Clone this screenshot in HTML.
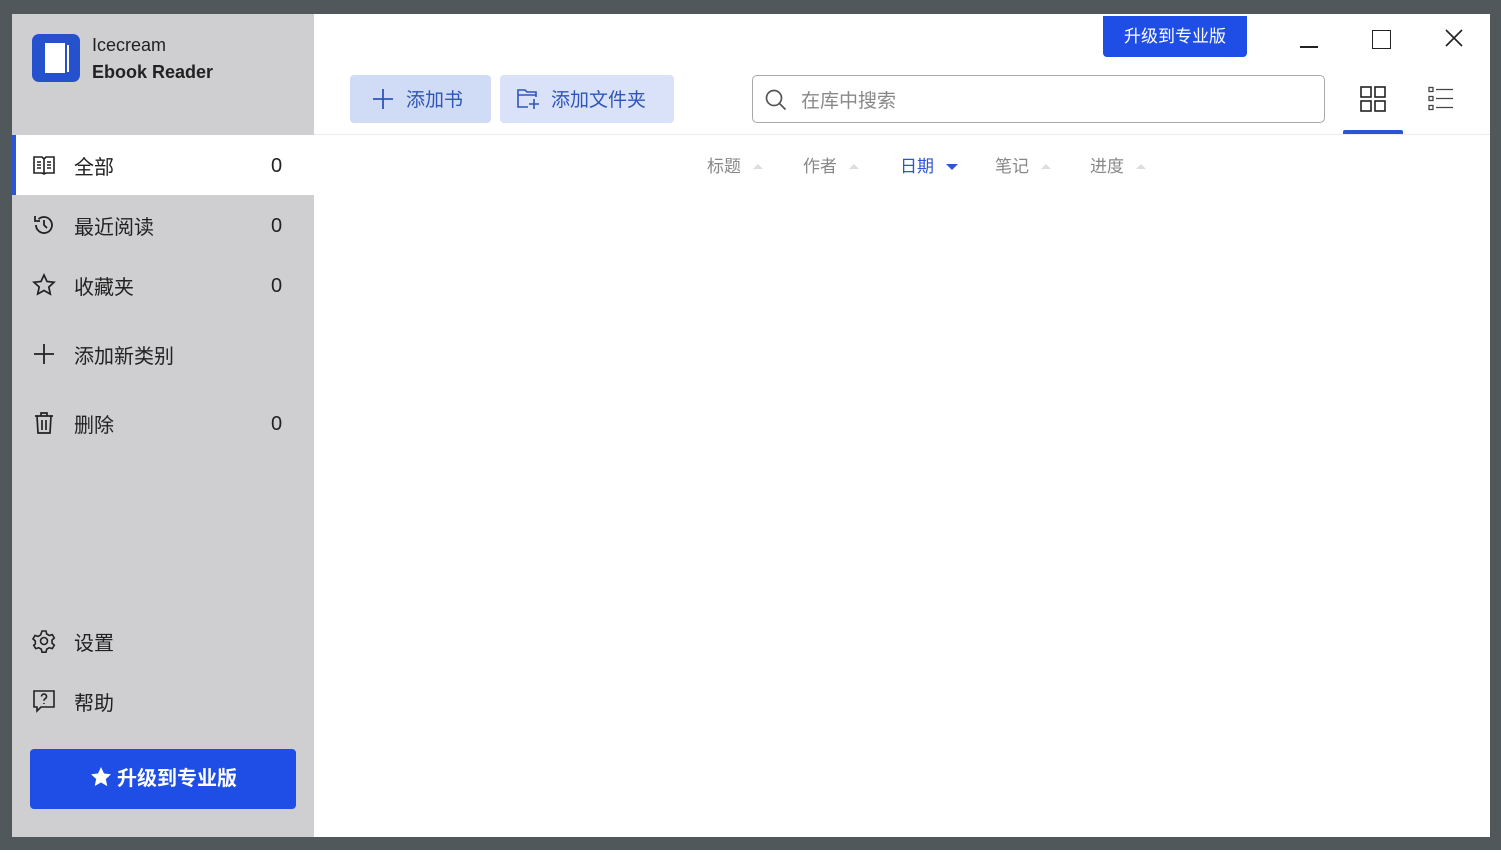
<!DOCTYPE html>
<html><head><meta charset="utf-8"><style>
*{margin:0;padding:0;box-sizing:border-box}
body{width:1501px;height:853px;background:#fff;position:relative;overflow:hidden;font-family:"Liberation Sans","Noto Sans CJK SC",sans-serif;color:#222}
.frame{position:absolute;left:0;top:0;width:1501px;height:850px;background:#50585c}
.win{position:absolute;left:12px;top:14px;width:1478px;height:823px;background:#fff}
.side{position:absolute;left:0;top:0;width:302px;height:823px;background:#cfcfd1}
.abs{position:absolute}
.item{position:absolute;left:0;width:302px;height:60px;font-size:20px;color:#222}
.item .ic{position:absolute;left:20px;top:18px;width:24px;height:24px}
.item .t{position:absolute;left:62px;top:16px}
.item .n{position:absolute;left:259px;top:20px;font-size:20px}
.sort{position:absolute;top:138px;font-size:17px;color:#888}
.tri{display:inline-block;width:0;height:0;border-left:5px solid transparent;border-right:5px solid transparent;border-bottom:5px solid #ddd;margin-left:12px;vertical-align:3px}
</style></head><body>
<div class="frame"></div>
<div class="win">
 <div class="side">
  <div class="abs" style="left:20px;top:20px;width:48px;height:48px;background:#2552cc;border-radius:7px">
   <div class="abs" style="left:13px;top:9px;width:20px;height:30px;background:#fff"></div>
   <div class="abs" style="left:35px;top:11px;width:2px;height:27px;background:#fff"></div>
  </div>
  <div class="abs" style="left:80px;top:21px;font-size:18px">Icecream</div>
  <div class="abs" style="left:80px;top:48px;font-size:18px;font-weight:bold">Ebook Reader</div>
  <div class="item" style="top:121px;background:#fff;border-left:4px solid #2a55d6">
   <svg class="ic" style="left:16px" viewBox="0 0 24 24" fill="none" stroke="#222" stroke-width="1.6"><path d="M2 4h8l2 2 2-2h8v16h-8l-2 1-2-1H2z M12 6v15 M5 9h4 M5 12h4 M5 15h4 M15 9h4 M15 12h4 M15 15h4"/></svg>
   <span class="t" style="left:58px">全部</span><span class="n" style="left:255px">0</span></div>
  <div class="item" style="top:181px">
   <svg class="ic" viewBox="0 0 24 24" fill="none" stroke="#222" stroke-width="1.8"><path d="M4 12a8 8 0 1 0 2.5-5.8 M3 3v5h5 M12 7v5l3 3"/></svg>
   <span class="t">最近阅读</span><span class="n">0</span></div>
  <div class="item" style="top:241px">
   <svg class="ic" viewBox="0 0 24 24" fill="none" stroke="#222" stroke-width="1.7"><path d="M12 2l3 6.5 7 .8-5.2 4.8 1.5 7L12 17.5 5.7 21l1.5-7L2 9.3l7-.8z"/></svg>
   <span class="t">收藏夹</span><span class="n">0</span></div>
  <div class="item" style="top:310px">
   <svg class="ic" viewBox="0 0 24 24" fill="none" stroke="#222" stroke-width="1.8"><path d="M12 2v20 M2 12h20"/></svg>
   <span class="t">添加新类别</span></div>
  <div class="item" style="top:379px">
   <svg class="ic" viewBox="0 0 24 24" fill="none" stroke="#222" stroke-width="1.7"><path d="M3 5h18 M9 5V2h6v3 M5 5l1 17h12l1-17 M10 9v10 M14 9v10"/></svg>
   <span class="t">删除</span><span class="n">0</span></div>
  <div class="item" style="top:597px">
   <svg class="ic" viewBox="0 0 24 24" fill="none" stroke="#222" stroke-width="1.6"><circle cx="12" cy="12" r="3.5"/><path d="M10 2h4l.7 3 2.6 1.5 3-.9 2 3.4-2.3 2.1v3l2.3 2.1-2 3.4-3-.9-2.6 1.5-.7 3h-4l-.7-3-2.6-1.5-3 .9-2-3.4L3.3 15v-3L1 9.9 3 6.5l3 .9L8.6 5.9z"/></svg>
   <span class="t">设置</span></div>
  <div class="item" style="top:657px">
   <svg class="ic" viewBox="0 0 24 24" fill="none" stroke="#222" stroke-width="1.6"><path d="M2 2h20v16H9l-4 4v-4H2z M9.5 7.5a2.5 2.5 0 1 1 3.5 2.3c-.8.4-1 1-1 2 M12 14v1"/></svg>
   <span class="t">帮助</span></div>
  <div class="abs" style="left:18px;top:735px;width:266px;height:60px;background:#1f4ee6;border-radius:4px;color:#fff;font-size:20px;font-weight:bold;text-align:center;line-height:60px">
   <svg style="vertical-align:-4px;margin-right:4px" width="24" height="24" viewBox="0 0 24 24"><path fill="#fff" d="M12 2l3 6.5 7 .8-5.2 4.8 1.5 7L12 17.5 5.7 21l1.5-7L2 9.3l7-.8z"/></svg>升级到专业版</div>
 </div>
 <div class="abs" style="left:302px;top:120px;width:1176px;height:1px;background:#ececec"></div>
 <div class="abs" style="left:1091px;top:2px;width:144px;height:41px;background:#1f4ee6;border-radius:0 0 4px 4px;color:#fff;font-size:17px;text-align:center;line-height:41px">升级到专业版</div>
 <div class="abs" style="left:1288px;top:32px;width:18px;height:1.5px;background:#222"></div>
 <div class="abs" style="left:1360px;top:16px;width:19px;height:19px;border:1.5px solid #222"></div>
 <svg class="abs" style="left:1432px;top:14px" width="20" height="20" viewBox="0 0 20 20" stroke="#222" stroke-width="1.6"><path d="M2 2l16 16M18 2L2 18"/></svg>
 <div class="abs" style="left:338px;top:61px;width:141px;height:48px;background:#d0dbf5;border-radius:4px;color:#2f55b8;font-size:19px;line-height:48px">
  <svg style="position:absolute;left:23px;top:14px" width="20" height="20" viewBox="0 0 20 20" stroke="#2f55b8" stroke-width="1.8"><path d="M10 0v20M0 10h20"/></svg><span style="position:absolute;left:56px;top:2px">添加书</span></div>
 <div class="abs" style="left:488px;top:61px;width:174px;height:48px;background:#d9e2f8;border-radius:4px;color:#2f55b8;font-size:19px;line-height:48px">
  <svg style="position:absolute;left:16px;top:12px" width="26" height="24" viewBox="0 0 26 24" fill="none" stroke="#2f55b8" stroke-width="1.6"><path d="M12 20H2V3h7l2 2h9v5 M2 8h18 M18 12v10 M13 17h10"/></svg><span style="position:absolute;left:51px;top:2px">添加文件夹</span></div>
 <div class="abs" style="left:740px;top:61px;width:573px;height:48px;border:1.5px solid #a8a8a8;border-radius:5px">
  <svg style="position:absolute;left:11px;top:12px" width="24" height="24" viewBox="0 0 24 24" fill="none" stroke="#555" stroke-width="1.7"><circle cx="10" cy="10" r="7.5"/><path d="M15.5 15.5l6 6"/></svg>
  <span style="position:absolute;left:48px;top:10px;font-size:19px;color:#888">在库中搜索</span></div>
 <svg class="abs" style="left:1348px;top:72px" width="26" height="26" viewBox="0 0 26 26" fill="none" stroke="#222" stroke-width="1.6"><rect x="1" y="1" width="10" height="10"/><rect x="15" y="1" width="10" height="10"/><rect x="1" y="15" width="10" height="10"/><rect x="15" y="15" width="10" height="10"/></svg>
 <div class="abs" style="left:1331px;top:116px;width:60px;height:4px;background:#2a55d6;border-radius:2px 2px 0 0"></div>
 <svg class="abs" style="left:1416px;top:72px" width="26" height="26" viewBox="0 0 26 26" fill="none" stroke="#444" stroke-width="1.3"><rect x="1" y="1.5" width="4" height="4"/><rect x="1" y="10.5" width="4" height="4"/><rect x="1" y="19.5" width="4" height="4"/><path d="M8 3.5h17M8 12.5h17M8 21.5h17"/></svg>
 <div class="sort" style="left:695px">标题<span class="tri"></span></div>
 <div class="sort" style="left:791px">作者<span class="tri"></span></div>
 <div class="sort" style="left:888px;color:#2a55d6">日期<span class="tri" style="border-bottom:0;border-top:6px solid #2a55d6;border-left-width:6px;border-right-width:6px;vertical-align:2px"></span></div>
 <div class="sort" style="left:983px">笔记<span class="tri"></span></div>
 <div class="sort" style="left:1078px">进度<span class="tri"></span></div>
</div>
</body></html>
